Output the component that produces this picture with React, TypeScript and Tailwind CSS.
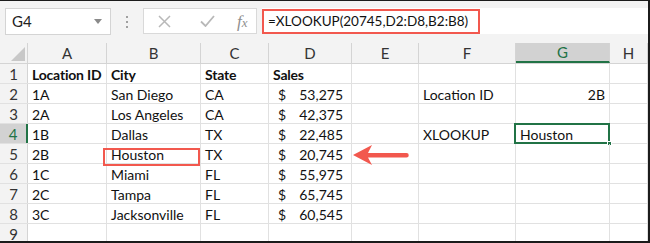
import { ReactNode } from "react";

const cols = [
  { k: "A", w: "w-[79px]" },
  { k: "B", w: "w-[94px]" },
  { k: "C", w: "w-[68px]" },
  { k: "D", w: "w-[83px]" },
  { k: "E", w: "w-[67px]" },
  { k: "F", w: "w-[97px]" },
  { k: "G", w: "w-[94px]" },
  { k: "H", w: "w-[38px]" },
];

const rows = [
  { n: 1, a: "Location ID", b: "City", c: "State", d: "Sales", bold: true },
  { n: 2, a: "1A", b: "San Diego", c: "CA", d: "53,275", f: "Location ID", g: "2B" },
  { n: 3, a: "2A", b: "Los Angeles", c: "CA", d: "42,375" },
  { n: 4, a: "1B", b: "Dallas", c: "TX", d: "22,485", f: "XLOOKUP", g: "Houston" },
  { n: 5, a: "2B", b: "Houston", c: "TX", d: "20,745" },
  { n: 6, a: "1C", b: "Miami", c: "FL", d: "55,975" },
  { n: 7, a: "2C", b: "Tampa", c: "FL", d: "65,745" },
  { n: 8, a: "3C", b: "Jacksonville", c: "FL", d: "60,545" },
  { n: 9 },
];

function Cell({ w, children, className = "" }: { w: string; children?: ReactNode; className?: string }) {
  return (
    <div className={`${w} shrink-0 h-full border-r border-[#e1e1e1] flex items-center whitespace-nowrap pt-[2px] px-[4px] ${className}`}>
      {children}
    </div>
  );
}

export default function App() {
  return (
    <div className="w-[650px] h-[243px] flex flex-col bg-white border-t border-r-2 border-b-2 border-[#1b1b1b] overflow-hidden font-['Lato','Noto_Sans',sans-serif] text-[14px] text-[#111]">
      {/* formula bar */}
      <div className="h-[42px] shrink-0 bg-[#f3f3f3] flex items-start pt-[7px]">
        <div className="ml-[5px] w-[106px] h-[27px] bg-white border border-[#d4d4d4] flex items-center justify-between pl-[6px] pr-[8px]">
          <span className="text-[15px] text-[#222]">G4</span>
          <svg width="8" height="5" viewBox="0 0 8 5"><path d="M0 0h8L4 5z" fill="#8a8a8a" /></svg>
        </div>
        <div className="w-[32px] h-[27px] flex flex-col items-center justify-center gap-[3px]">
          <span className="w-[2px] h-[2px] bg-[#a0a0a0]" />
          <span className="w-[2px] h-[2px] bg-[#a0a0a0]" />
          <span className="w-[2px] h-[2px] bg-[#a0a0a0]" />
        </div>
        <div className="w-[114px] h-[26px] bg-white border border-[#d9d9d9] flex items-center">
          <svg className="ml-[14px]" width="13" height="13" viewBox="0 0 13 13">
            <path d="M1 1l11 11M12 1L1 12" stroke="#b8b8b8" strokeWidth="1.5" />
          </svg>
          <svg className="ml-[29px]" width="15" height="12" viewBox="0 0 15 12">
            <path d="M1 6.5l4.5 4.5L14 1" stroke="#b8b8b8" strokeWidth="1.8" fill="none" />
          </svg>
          <span className="ml-[22px] font-['Liberation_Serif',serif] italic text-[17px] leading-none text-[#8f8f8f]">
            f<span className="text-[13px]">x</span>
          </span>
        </div>
        <div className="ml-[5px] flex-1 h-[26px] bg-white flex items-center">
          <span className="h-[25px] w-[218px] border-2 border-[#f2584e] flex items-center pl-[4px] text-[13.5px] text-[#111]">
            =XLOOKUP(20745,D2:D8,B2:B8)
          </span>
        </div>
      </div>

      {/* column headers */}
      <div className="h-[21px] shrink-0 flex bg-[#f3f3f3] border-b border-[#d4d4d4] text-[15px] text-[#333]">
        <div className="w-[28px] shrink-0 h-full border-r border-[#d4d4d4] flex items-end justify-end p-[2px]">
          <svg width="14" height="14" viewBox="0 0 14 14"><path d="M14 0v14H0z" fill="#c8c8c8" /></svg>
        </div>
        {cols.map((c) => (
          <div
            key={c.k}
            className={`${c.w} shrink-0 h-full border-r border-[#d4d4d4] flex items-center justify-center ${
              c.k === "G" ? "bg-[#d2d2d2] text-[#217346] border-b-2 border-b-[#217346]" : ""
            }`}
          >
            {c.k}
          </div>
        ))}
      </div>

      {/* rows */}
      {rows.map((r) => (
        <div key={r.n} className={`h-[20px] shrink-0 flex border-b border-[#e1e1e1] ${r.bold ? "font-bold tracking-[-0.2px]" : ""}`}>
          <div
            className={`w-[28px] shrink-0 h-full flex items-center justify-center pt-[2px] text-[15px] font-normal border-r ${
              r.n === 4
                ? "bg-[#d2d2d2] text-[#217346] border-r-2 border-r-[#217346]"
                : "bg-[#f3f3f3] text-[#333] border-[#d4d4d4]"
            }`}
          >
            {r.n}
          </div>
          <Cell w="w-[79px]">{r.a}</Cell>
          <Cell w="w-[94px]" className="relative">
            {r.b}
            {r.n === 5 && (
              <span className="absolute left-[-4px] right-0 top-[4px] bottom-[-3px] border-2 border-[#f2584e]" />
            )}
          </Cell>
          <Cell w="w-[68px]">{r.c}</Cell>
          <Cell w="w-[83px]" className={r.bold ? "" : "justify-between pl-[9px] pr-[8px]"}>
            {r.bold ? r.d : r.d && (<><span>$</span><span>{r.d}</span></>)}
          </Cell>
          <Cell w="w-[67px]" className="relative">
            {r.n === 5 && (
              <svg className="absolute left-[0px] top-[0px]" width="58" height="22" viewBox="0 0 58 22">
                <path d="M1 11L20 1L16 9H54.5a2.2 2.2 0 0 1 0 4.5H16L20 21z" fill="#f2584e" />
              </svg>
            )}
          </Cell>
          <Cell w="w-[97px]">{r.f}</Cell>
          <Cell w="w-[94px]" className={`relative ${r.n === 2 ? "justify-end" : ""}`}>
            {r.g}
            {r.n === 4 && (
              <span className="absolute left-[-2px] right-[-1px] top-[-1px] bottom-[-1px] border-2 border-[#217346]">
                <span className="absolute right-[-4px] bottom-[-4px] w-[5px] h-[5px] bg-[#217346] border border-white" />
              </span>
            )}
          </Cell>
          <Cell w="w-[38px]" />
        </div>
      ))}
    </div>
  );
}
